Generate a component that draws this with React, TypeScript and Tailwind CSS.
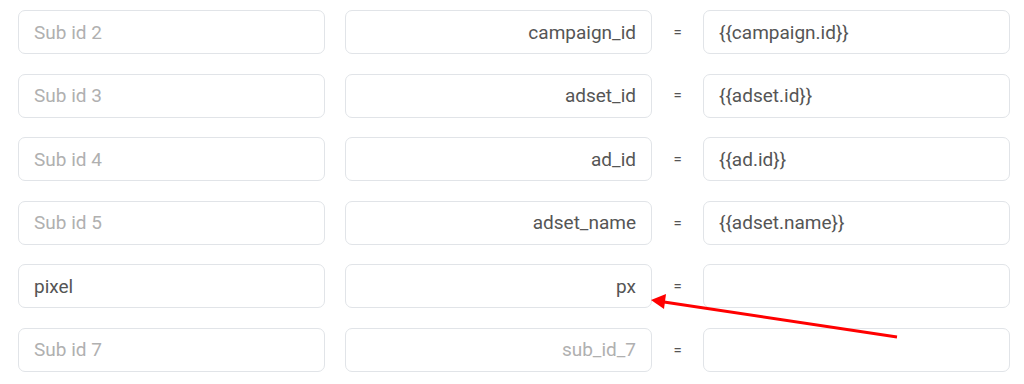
const rows = [
  { name: "", namePh: "Sub id 2", param: "campaign_id", paramPh: "", value: "{{campaign.id}}" },
  { name: "", namePh: "Sub id 3", param: "adset_id", paramPh: "", value: "{{adset.id}}" },
  { name: "", namePh: "Sub id 4", param: "ad_id", paramPh: "", value: "{{ad.id}}" },
  { name: "", namePh: "Sub id 5", param: "adset_name", paramPh: "", value: "{{adset.name}}" },
  { name: "pixel", namePh: "Sub id 6", param: "px", paramPh: "", value: "" },
  { name: "", namePh: "Sub id 7", param: "", paramPh: "sub_id_7", value: "" },
];

const inputCls =
  "h-[44px] w-[307px] rounded-[7px] border border-[#e1e4e8] bg-white px-[15px] text-[19px] text-[#555] placeholder:text-[#b0b0b0] outline-none";

export default function App() {
  return (
    <div className="relative w-[1024px] h-[384px] bg-white" style={{ fontFamily: "Roboto, 'Liberation Sans', sans-serif" }}>
      <div className="flex flex-col gap-[19.6px] pl-[18px] pt-[10px]">
        {rows.map((r, i) => (
          <div key={i} className="flex items-center">
            <input className={inputCls} placeholder={r.namePh} defaultValue={r.name} />
            <input
              className={inputCls + " ml-[20px] text-right"}
              placeholder={r.paramPh}
              defaultValue={r.param}
            />
            <span className="w-[51px] text-center text-[15px] text-[#555]">=</span>
            <input className={inputCls} defaultValue={r.value} />
          </div>
        ))}
      </div>
      <svg className="absolute left-0 top-0 pointer-events-none" width="1024" height="384">
        <line x1="897" y1="337" x2="664" y2="302" stroke="#ff0000" strokeWidth="3" />
        <polygon points="651,300 666,294 664,309" fill="#ff0000" />
      </svg>
    </div>
  );
}
